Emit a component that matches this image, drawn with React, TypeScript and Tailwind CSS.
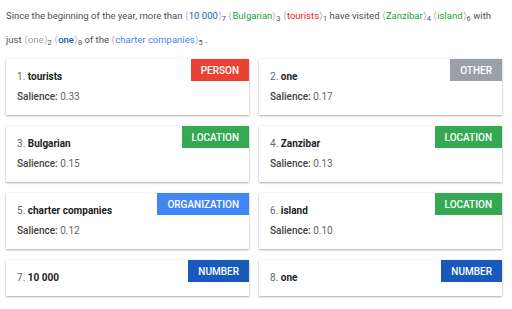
import React from "react";

type Tok = { text: string; color: string; n: number; bold?: boolean };

const Ent = ({ t }: { t: Tok }) => (
  <span>
    <span className="text-[#b0b4b8]">⟨</span>
    <span className={t.bold ? "font-medium" : ""} style={{ color: t.color }}>
      {t.text}
    </span>
    <span className="text-[#b0b4b8]">⟩</span>
    <sub className="text-[7.5px] leading-none text-[#555]">{t.n}</sub>
  </span>
);

const cards = [
  { n: 1, name: "tourists", sal: "0.33", type: "PERSON", bg: "bg-[#e94235]" },
  { n: 2, name: "one", sal: "0.17", type: "OTHER", bg: "bg-[#9aa0a6]" },
  { n: 3, name: "Bulgarian", sal: "0.15", type: "LOCATION", bg: "bg-[#34a853]" },
  { n: 4, name: "Zanzibar", sal: "0.13", type: "LOCATION", bg: "bg-[#34a853]" },
  { n: 5, name: "charter companies", sal: "0.12", type: "ORGANIZATION", bg: "bg-[#4285f4]" },
  { n: 6, name: "island", sal: "0.10", type: "LOCATION", bg: "bg-[#34a853]" },
  { n: 7, name: "10 000", sal: null, type: "NUMBER", bg: "bg-[#185abc]" },
  { n: 8, name: "one", sal: null, type: "NUMBER", bg: "bg-[#185abc]" },
];

export default function App() {
  const green = "#1e9e3e";
  return (
    <div
      className="bg-white w-[512px] h-[309px] pl-[6px] pr-[10px] pt-[4px]"
      style={{ fontFamily: "Roboto, 'Liberation Sans', sans-serif" }}
    >
      <p className="text-[9.5px] leading-[24px] text-[#505050]">
        Since the beginning of the year, more than{" "}
        <Ent t={{ text: "10 000", color: "#185abc", n: 7 }} />{" "}
        <Ent t={{ text: "Bulgarian", color: green, n: 3 }} />{" "}
        <Ent t={{ text: "tourists", color: "#e02a1e", n: 1 }} /> have visited{" "}
        <Ent t={{ text: "Zanzibar", color: green, n: 4 }} />{" "}
        <Ent t={{ text: "island", color: green, n: 6 }} /> with just{" "}
        <Ent t={{ text: "one", color: "#9aa0a6", n: 2 }} />{" "}
        <Ent t={{ text: "one", color: "#185abc", n: 8, bold: true }} /> of the{" "}
        <Ent t={{ text: "charter companies", color: "#4285f4", n: 5 }} /> .
      </p>
      <div className="grid grid-cols-2 gap-x-[10px] gap-y-[11px] mt-[7px]">
        {cards.map((c) => (
          <div
            key={c.n}
            className="relative bg-white px-[11px] py-[8px] shadow-[0_1px_2px_rgba(0,0,0,0.3),0_0_2px_rgba(0,0,0,0.08)]"
          >
            <div
              className={`absolute top-0 right-0 h-[22px] px-[10px] flex items-center text-[10px] font-medium text-white ${c.bg}`}
            >
              {c.type}
            </div>
            <div className="text-[10px] leading-[20px]">
              <span className="text-[#666]">{c.n}. </span>
              <span className="font-bold text-[#222]">{c.name}</span>
            </div>
            {c.sal && (
              <div className="text-[10px] leading-[20px]">
                <span className="text-[#444] font-medium">Salience:</span>{" "}
                <span className="text-[#666]">{c.sal}</span>
              </div>
            )}
          </div>
        ))}
      </div>
    </div>
  );
}
